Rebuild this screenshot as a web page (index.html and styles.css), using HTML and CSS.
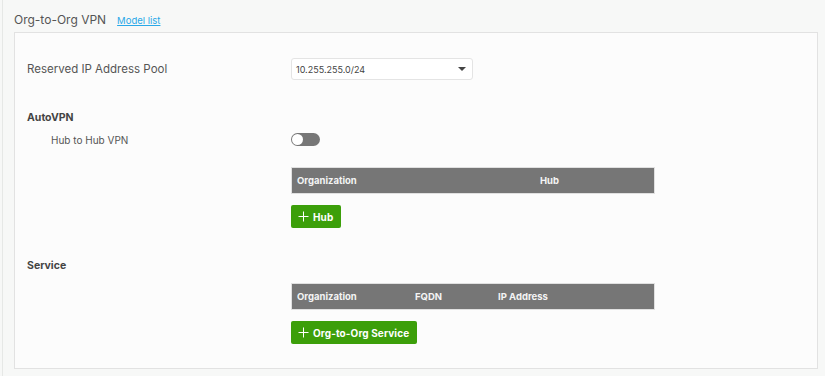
FILE: index.html
```html
<!DOCTYPE html>
<html lang="en">
<head>
  <meta charset="UTF-8">
  <title>Org-to-Org VPN</title>
  <link rel="stylesheet" href="styles.css">
</head>
<body>

<div class="page">
  <div class="page-head">
    <span class="page-title">Org-to-Org VPN</span>
    <a class="model-link" href="#">Model list</a>
  </div>

  <div class="panel">
    <div class="row pool-row">
      <div class="label">Reserved IP Address Pool</div>
      <div class="field">
        <div class="select">
          <span>10.255.255.0/24</span>
          <span class="caret"></span>
        </div>
      </div>
    </div>

    <div class="section-title autovpn">AutoVPN</div>
    <div class="row toggle-row">
      <div class="label sub">Hub to Hub VPN</div>
      <div class="field">
        <div class="toggle"><span class="knob"></span></div>
      </div>
    </div>

    <div class="row hub-block">
      <div class="label"></div>
      <div class="field">
        <div class="table-head">
          <span class="col-org">Organization</span>
          <span>Hub</span>
        </div>
        <button class="add-btn" type="button">
          <svg class="plus" width="11" height="11" viewBox="0 0 11 11"><path d="M5.5 0.5v10M0.5 5.5h10" stroke="#ffffff" stroke-width="1"/></svg>
          Hub
        </button>
      </div>
    </div>

    <div class="section-title service">Service</div>
    <div class="row service-block">
      <div class="label"></div>
      <div class="field">
        <div class="table-head">
          <span class="col-org2">Organization</span>
          <span class="col-fqdn">FQDN</span>
          <span>IP Address</span>
        </div>
        <button class="add-btn" type="button">
          <svg class="plus" width="11" height="11" viewBox="0 0 11 11"><path d="M5.5 0.5v10M0.5 5.5h10" stroke="#ffffff" stroke-width="1"/></svg>
          Org-to-Org Service
        </button>
      </div>
    </div>
  </div>
</div>

</body>
</html>
```

FILE: styles.css
```css
body {
  font-family: Inter, "Open Sans", sans-serif;
  margin: 0;
  padding: 0;
  background-color: #f7f8f7;
  color: #555555;
}

.page {
  height: 376px;
  border-left: 1px solid #e6e8e6;
  margin-left: 2px;
  padding: 0 7px 0 11px;
  box-sizing: border-box;
}

.page-head {
  display: flex;
  align-items: baseline;
  height: 32px;
  padding-top: 12px;
  box-sizing: border-box;
}

.page-title {
  font-size: 12px;
  color: #555555;
}

.model-link {
  margin-left: 11px;
  font-size: 9.5px;
  color: #29a8e8;
  text-decoration: underline;
}

.panel {
  background-color: #fcfcfc;
  border: 1px solid #e2e2e2;
  padding: 25px 12px 24px 12px;
  height: 337px;
  box-sizing: border-box;
}

.row {
  display: flex;
}

.label {
  width: 264px;
  flex-shrink: 0;
  font-size: 11.5px;
}

.label.sub {
  padding-left: 24px;
  box-sizing: border-box;
  font-size: 10px;
}

.pool-row {
  align-items: center;
  height: 22px;
}

.field {
  flex: 1;
}

.select {
  width: 182px;
  height: 22px;
  border: 1px solid #e4e4e4;
  border-radius: 3px;
  background-color: #ffffff;
  box-sizing: border-box;
  display: flex;
  align-items: center;
  justify-content: space-between;
  padding: 0 6px 0 4px;
  font-size: 9px;
  color: #444444;
}

.caret {
  width: 0;
  height: 0;
  border-left: 4px solid transparent;
  border-right: 4px solid transparent;
  border-top: 4px solid #444444;
}

.section-title {
  font-size: 10.5px;
  font-weight: bold;
  color: #444444;
}

.autovpn {
  margin-top: 31px;
}

.toggle-row {
  align-items: center;
  margin-top: 9px;
  height: 13px;
}

.toggle {
  width: 29px;
  height: 13px;
  border-radius: 7px;
  background-color: #777777;
  position: relative;
}

.toggle .knob {
  position: absolute;
  left: 1px;
  top: 1px;
  width: 11px;
  height: 11px;
  border-radius: 50%;
  background-color: #ffffff;
}

.table-head {
  width: 364px;
  height: 27px;
  background-color: #767676;
  border: 1px solid #e0e0e0;
  box-sizing: border-box;
  display: flex;
  align-items: center;
  padding-left: 5px;
  font-size: 9.5px;
  font-weight: bold;
  color: #f4f4f4;
}

.hub-block .table-head {
  margin-top: 21px;
}

.service-block .table-head {
  margin-top: 11px;
}

.col-org {
  width: 243px;
}

.col-org2 {
  width: 118px;
}

.col-fqdn {
  width: 83px;
}

.add-btn {
  margin-top: 11px;
  height: 23px;
  padding: 0 8px 0 7px;
  border: none;
  border-radius: 2px;
  background-color: #3c9f0a;
  color: #ffffff;
  font-family: inherit;
  font-size: 10px;
  font-weight: bold;
  letter-spacing: 0.1px;
  display: flex;
  align-items: center;
  gap: 4px;
  cursor: pointer;
}

.service {
  margin-top: 31px;
}
```
